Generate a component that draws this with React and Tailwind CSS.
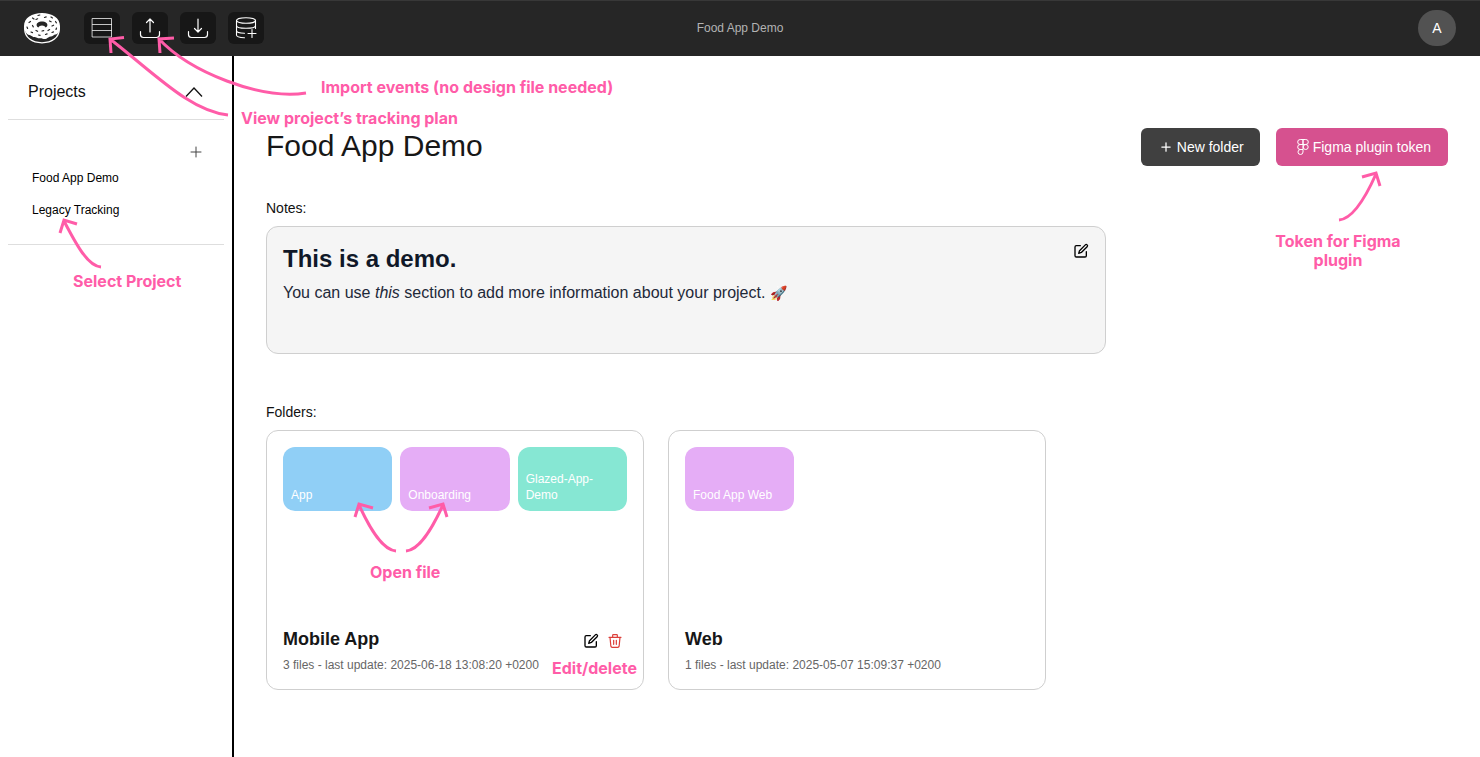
import React from "react";

function DonutLogo() {
  return (
    <svg viewBox="0 0 36 31" className="h-[31px] w-9" aria-hidden="true">
      <path d="M.7 13v3C.7 24.500 8 29.800 18 29.800S35.300 24.500 35.300 16v-3" fill="#262626" stroke="#fff" strokeWidth="1.300" />
      <path
        d="M0 13C0 5 8 0 18 0s18 5 18 13c0 3-.6 5.500-2.400 7.500-1.500 1.300-2.800.7-4.300 2s-3.300.8-5 1.900-3.500 2.300-5.600 1.300-3.600.2-5.700-.9-3 .1-4.900-1.500-3.500-.6-5.200-2.500S0 16 0 13z"
        fill="#fff"
      />
      <path d="M12.600 12c0-2.300 2.400-3.600 5.400-3.600s5.400 1.300 5.400 3.600c0 1.200-.7 2-1.700 2.400-.7-1.300-2-2-3.700-2s-3 .7-3.700 2c-1-.4-1.700-1.200-1.700-2.400z" fill="#262626" />
      <g stroke="#262626" strokeWidth="1.200" strokeLinecap="round">
        <path d="M8.500 5l1.500 1M14 2.500l1.800-.5M20.500 4.500l1.700-.6M27 4l1.500.9M5 9.500l1.500-1M12 6.500l1.600-.7M25.500 8l1.600.8M31.500 8.500l.9 1.300M3 14l.6 1.500M8.500 12.500l.8 1.400M28 13l1.600-.8M32.500 15l-.5 1.500M7 19l1.500.6M12 17.500l1.600.8M18 18l1.700-.4M24 17.500l1.600-.9M28 19.500l1.500-.6M14.500 22l1.600.4M21.500 21.500l1.600-.6" />
      </g>
    </svg>
  );
}

function Svg({ size, stroke = 1, className = "", children }) {
  return (
    <svg
      viewBox="0 0 24 24"
      width={size}
      height={size}
      fill="none"
      stroke="currentColor"
      strokeWidth={stroke}
      strokeLinecap="round"
      strokeLinejoin="round"
      className={className}
      aria-hidden="true"
    >
      {children}
    </svg>
  );
}

const RowsIcon = () => (
  <Svg size={24}>
    <path d="M2.500 2.500h19v18.500h-19zM2.500 8.500h19M2.500 14.500h19" strokeLinejoin="miter" opacity=".75" />
  </Svg>
);
const UploadIcon = () => (
  <Svg size={24} stroke={1.2}>
    <path d="M2.500 15.500v3a3 3 0 0 0 3 3h13a3 3 0 0 0 3-3v-3M12 16V3M8.500 6.500L12 3l3.500 3.500" />
  </Svg>
);
const DownloadIcon = () => (
  <Svg size={24} stroke={1.2}>
    <path d="M2.500 15.500v3a3 3 0 0 0 3 3h13a3 3 0 0 0 3-3v-3M12 3v13M8.500 12.500L12 16l3.500-3.500" />
  </Svg>
);
const DatabaseIcon = () => (
  <Svg size={24} stroke={1.1}>
    <ellipse cx="12" cy="4.500" rx="9.500" ry="2.800" />
    <path d="M2.500 4.500v5c0 1.600 4 2.800 9.500 2.800s9.500-1.200 9.500-2.800v-5M2.500 9.500v5c0 1.500 3.500 2.700 8 2.800M2.500 14.500v4.500c0 1.500 3.500 2.600 8 2.700M21.500 9.500v3M18 13.500v8M14 17.500h8" />
  </Svg>
);
const EditIcon = () => (
  <Svg size={16} stroke={2}>
    <path d="M11 4H5a2 2 0 0 0-2 2v13a2 2 0 0 0 2 2h13a2 2 0 0 0 2-2v-6" />
    <path d="M18.500 2.800a1.900 1.900 0 0 1 2.700 2.700L12.500 14.200 8.500 15.500l1.300-4z" />
  </Svg>
);
const TrashIcon = () => (
  <Svg size={16} stroke={1.8}>
    <path d="M3 6.500h18M8.500 6V3.500a1 1 0 0 1 1-1h5a1 1 0 0 1 1 1V6M4.500 6.500l1.300 13.300a2 2 0 0 0 2 1.700h8.400a2 2 0 0 0 2-1.700L19.500 6.500M10 11v6M14 11v6" />
  </Svg>
);
const PlusIcon = ({ size, stroke }) => (
  <Svg size={size} stroke={stroke}>
    <path d="M12 2v20M2 12h20" />
  </Svg>
);
const FigmaIcon = () => (
  <svg viewBox="0 0 12 16" width="12" height="16" fill="none" stroke="currentColor" aria-hidden="true">
    <path d="M6 .5H3.200a2.500 2.500 0 0 0 0 5H6zM6 .5h2.800a2.500 2.500 0 0 1 0 5H6zM6 5.500H3.200a2.500 2.500 0 0 0 0 5H6zM6 10.500H3.200a2.500 2.500 0 1 0 2.800 2.500z" />
    <circle cx="8.700" cy="8" r="2.500" />
  </svg>
);

const tools = [
  { label: "Tracking plan", Icon: RowsIcon },
  { label: "Import events", Icon: UploadIcon },
  { label: "Export events", Icon: DownloadIcon },
  { label: "Add data source", Icon: DatabaseIcon },
];

const folders = [
  {
    name: "Mobile App",
    meta: "3 files - last update: 2025-06-18 13:08:20 +0200",
    editable: true,
    files: [
      { name: "App", color: "bg-[#90cff6]" },
      { name: "Onboarding", color: "bg-[#e5adf6]" },
      { name: "Glazed-App-Demo", color: "bg-[#86e7d3]" },
    ],
  },
  {
    name: "Web",
    meta: "1 files - last update: 2025-05-07 15:09:37 +0200",
    editable: false,
    files: [{ name: "Food App Web", color: "bg-[#e5adf6]" }],
  },
];

function Header() {
  return (
    <header className="grid h-14 grid-cols-[1fr_auto_1fr] items-center bg-[#262626] px-6 shadow-[inset_0_1px_0_#383838]">
      <div className="flex items-center gap-6">
        <a href="#home" aria-label="Home">
          <DonutLogo />
        </a>
        <nav className="flex gap-3">
          {tools.map(({ label, Icon }) => (
            <button
              key={label}
              aria-label={label}
              className="flex h-8 w-9 items-center justify-center rounded-md bg-[#171717] text-white"
            >
              <Icon />
            </button>
          ))}
        </nav>
      </div>
      <p className="text-xs text-[#b3b3b3]">Food App Demo</p>
      <button className="flex h-9 w-[38px] items-center justify-center justify-self-end rounded-full bg-[#525252] text-sm text-white">
        A
      </button>
    </header>
  );
}

function Sidebar() {
  return (
    <aside className="w-[234px] shrink-0 border-r-2 border-black px-2 pt-4">
      <div className="flex h-12 items-center justify-between border-b border-[#dedede] px-5 pb-2 text-[#111]">
        <h2 className="text-base">Projects</h2>
        <button aria-label="Collapse projects" className="flex">
          <svg viewBox="0 0 20 12" width="20" height="12" fill="none" stroke="currentColor" strokeWidth="1.300" aria-hidden="true">
            <path d="M2 10.500L10 2l8 8.500" />
          </svg>
        </button>
      </div>
      <div className="border-b border-[#dedede] px-5 pt-6 pb-[18px]">
        <div className="flex justify-end">
          <button aria-label="Add project" className="flex size-4 items-center justify-center text-[#444]">
            <PlusIcon size={12} stroke={2} />
          </button>
        </div>
        <ul className="px-1 pt-[2px] text-xs text-black">
          <li>
            <a href="#food" className="flex h-8 items-center">Food App Demo</a>
          </li>
          <li>
            <a href="#legacy" className="flex h-8 items-center">Legacy Tracking</a>
          </li>
        </ul>
      </div>
    </aside>
  );
}

function FolderCard({ folder }) {
  return (
    <article className="flex h-[260px] w-[378px] flex-col justify-between rounded-xl border border-[#cfcfcf] px-4 pt-4 pb-[14px]">
      <div className="grid grid-cols-3 gap-2">
        {folder.files.map((file) => (
          <a
            key={file.name}
            href="#file"
            className={"flex h-16 items-end rounded-xl p-2 text-xs text-white " + file.color}
          >
            {file.name}
          </a>
        ))}
      </div>
      <div>
        <div className="flex items-center justify-between">
          <h3 className="text-lg font-bold text-[#171717]">{folder.name}</h3>
          {folder.editable && (
            <div className="flex gap-2 pt-1 pr-1">
              <button aria-label="Edit folder" className="text-black"><EditIcon /></button>
              <button aria-label="Delete folder" className="text-[#dc3f3a]"><TrashIcon /></button>
            </div>
          )}
        </div>
        <p className="pt-[2px] text-xs leading-5 text-[#666]">{folder.meta}</p>
      </div>
    </article>
  );
}

const arrows = [
  "M228 115C190 111 155 74 110 39M124 37.500L110 39L111 53",
  "M306 93C260 100 190 72 159 39M174 38L159 39L160 53",
  "M101 267C88 266 77 246 64 221M77 224L64 220L60 233",
  "M1339 220C1352 219 1364 201 1376 174M1362 177L1376 173L1380 186",
  "M396 551C383 550 371 531 359 505M373 508L359 504L355 517",
  "M406 551C419 550 431 531 443 505M429 508L443 504L447 517",
];

const captions = [
  { text: "Import events (no design file needed)", place: "left-[321px] top-[78px]" },
  { text: "View project’s tracking plan", place: "left-[241px] top-[109px]" },
  { text: "Select Project", place: "left-[73px] top-[272px]" },
  { text: "Open file", place: "left-[370px] top-[563px]" },
  { text: "Edit/delete", place: "left-[552px] top-[659px]" },
];

function Annotations() {
  return (
    <div className="pointer-events-none absolute inset-0 overflow-hidden font-['Inter',sans-serif] text-base leading-[19px] font-bold text-[#ff5ca8]">
      <svg
        width="1480"
        height="757"
        className="absolute top-0 left-0 max-w-none"
        fill="none"
        stroke="currentColor"
        strokeWidth="3"
        aria-hidden="true"
      >
        {arrows.map((d) => (
          <path key={d} d={d} />
        ))}
      </svg>
      {captions.map((c) => (
        <p key={c.text} className={"absolute whitespace-nowrap " + c.place}>{c.text}</p>
      ))}
      <p className="absolute top-[232px] left-[1268px] w-[140px] text-center">Token for Figma plugin</p>
    </div>
  );
}

export default function App() {
  return (
    <div className="relative flex min-h-screen flex-col bg-white font-['Liberation_Sans',Arial,sans-serif]">
      <Header />
      <div className="flex grow">
        <Sidebar />
        <main className="min-w-0 grow px-8 pt-[70px]">
          <div className="flex items-center justify-between">
            <h1 className="text-3xl leading-10 text-[#171717]">Food App Demo</h1>
            <div className="flex gap-4 pt-[2px] text-sm text-white">
              <button className="flex h-[38px] items-center gap-[6px] rounded-md bg-[#404040] pr-4 pl-5">
                <PlusIcon size={10} stroke={3} />
                New folder
              </button>
              <button className="flex h-[38px] items-center gap-1 rounded-md bg-[#d6518f] pr-[17px] pl-[21px]">
                <FigmaIcon />
                Figma plugin token
              </button>
            </div>
          </div>
          <h2 className="pt-8 text-sm text-[#111]">Notes:</h2>
          <section className="mt-2 flex h-32 max-w-[840px] items-start justify-between rounded-xl border border-[#cfcfcf] bg-[#f5f5f5] p-4">
            <div>
              <h3 className="text-2xl font-bold text-[#101828]">This is a demo.</h3>
              <p className="pt-[6px] text-base text-[#1e2939]">
                You can use <em>this</em> section to add more information about your project.{" "}
                <span className="text-sm">🚀</span>
              </p>
            </div>
            <button aria-label="Edit notes" className="text-black"><EditIcon /></button>
          </section>
          <h2 className="pt-12 text-sm text-[#111]">Folders:</h2>
          <div className="mt-2 flex flex-wrap gap-6">
            {folders.map((folder) => (
              <FolderCard key={folder.name} folder={folder} />
            ))}
          </div>
        </main>
      </div>
      <Annotations />
    </div>
  );
}
